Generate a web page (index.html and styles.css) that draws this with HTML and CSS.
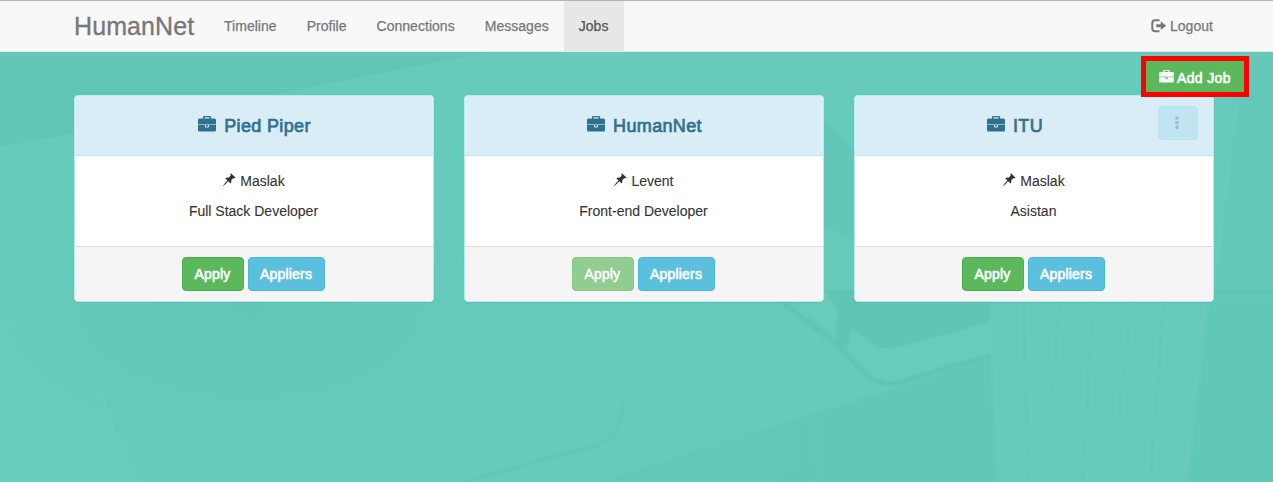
FILE: index.html
```html
<!DOCTYPE html>
<html lang="en">
<head>
<meta charset="utf-8">
<title>HumanNet</title>
<link rel="stylesheet" href="styles.css">
</head>
<body>
<svg width="0" height="0" class="sprite" aria-hidden="true">
  <symbol id="briefcase" viewBox="0 0 18 16"><path d="M5 2.500V1Q5 0 6 0h6Q13 0 13 1v1.500h3.500Q18 2.500 18 4V8H0V4Q0 2.500 1.500 2.500zM6.500 2.500h5V1.200h-5zM0 9h7v1.500Q7 11.500 8 11.500h2q1 0 1-1V9h7v5q0 1.500-1.500 1.500h-15Q0 15.500 0 14zM8 9h2v1.500H8z" fill="currentColor" fill-rule="evenodd"/><path d="M0 8h18v1H0z" fill="currentColor" opacity=".45"/></symbol>
  <symbol id="pin" viewBox="0 0 14 14"><path d="M9 .3L13.600 4.700Q12.600 5.700 11.300 5.200L9.200 7.300Q9.900 9.300 8.600 10.500L6.200 8.200Q3.600 11.600.3 13.700Q2.400 10.300 5.500 7.500L3.300 5.300Q4.500 4 6.600 4.700L8.700 2.600Q8.100 1.300 9 .3z" fill="currentColor"/></symbol>
  <symbol id="logout" viewBox="0 0 16 14"><path d="M8.500 1.200H4Q1.300 1.200 1.300 4v5.500q0 2.700 2.700 2.700h4.500" fill="none" stroke="currentColor" stroke-width="2"/><path d="M5.300 5.200h4.500V2.300L15.200 6.700 9.800 11V8.300H5.300z" fill="currentColor"/></symbol>
</svg>

<nav class="navbar">
  <div class="container navbar-inner">
    <a class="brand">HumanNet</a>
    <a class="nav-link">Timeline</a>
    <a class="nav-link">Profile</a>
    <a class="nav-link">Connections</a>
    <a class="nav-link">Messages</a>
    <a class="nav-link active">Jobs</a>
    <a class="nav-link logout"><svg class="icon-logout"><use href="#logout"/></svg>Logout</a>
  </div>
</nav>

<main class="stage">
  <svg class="backdrop" viewBox="0 52 1273 430" aria-hidden="true">
    <defs>
      <radialGradient id="shade"><stop offset="0" stop-color="#61c6b6" stop-opacity=".7"/><stop offset="1" stop-color="#61c6b6" stop-opacity="0"/></radialGradient>
      <linearGradient id="desk" gradientUnits="userSpaceOnUse" x1="560" y1="0" x2="850" y2="0"><stop offset="0" stop-color="#61c6b6" stop-opacity=".4"/><stop offset="1" stop-color="#61c6b6" stop-opacity=".75"/></linearGradient>
      <filter id="soft"><feGaussianBlur stdDeviation=".8"/></filter>
    </defs>
    <path d="M0 52H487L275 94 0 147z" fill="#61c6b6"/>
    <ellipse cx="250" cy="310" rx="290" ry="150" fill="url(#shade)"/>
    <path d="M824 120L854 150V240L824 225z" fill="#62c7b7"/>
    <path d="M1245 52H1273V300H1214z" fill="#64c9b9"/>
    <g filter="url(#soft)">
      <path d="M0 324L62 310Q88 365 128 452L157 523H0z" fill="#68cdbd" opacity=".5"/>
      <path d="M108 415Q130 450 157 523" stroke="#62c7b7" fill="none"/>
      <path d="M340 524Q450 483 592 447Q627 433 621 401" stroke="#61c5b5" stroke-width="2" fill="none"/>
      <path d="M470 524L633 471Q790 420 891 390L991 358V290H1283V492H500z" fill="url(#desk)"/>
      <path d="M785 290L836 344L870 376Q882 383 895 379L991 350V290z" fill="#60c5b5"/>
      <path d="M785 290H826L838 313 835 340zM851 327L875 346Q885 351 899 347L991 322V351L901 378Q881 383 868 375L847 353z" fill="#67ccbc"/>
      <path d="M780 300L836 344L865 374Q879 387 902 382L991 355" stroke="#60c5b5" stroke-width="5" fill="none"/>
      <path d="M850 439L991 403M780 482L991 434M870 482L991 459M1215 360L1273 343M1215 390L1273 375M1210 430L1273 412M1205 464L1273 446" stroke="#60c5b5" stroke-width="2" opacity=".5"/>
      <path d="M989 290H1210L1187 490H1005Q996 482 995 466z" fill="#66cbbb"/>
      <path d="M1024 300L1028 482M1060 300L1052 396M1094 300L1082 482M1132 300L1118 424M1164 300L1150 482" stroke="#62c8b8" stroke-width="3" opacity=".35"/>
    </g>
  </svg>
  <div class="container">
    <div class="toolbar">
      <button class="btn add-job"><svg class="icon-add"><use href="#briefcase"/></svg>Add Job</button>
    </div>
    <div class="cards">
      <article class="card">
        <header class="card-head"><svg class="icon-case"><use href="#briefcase"/></svg><h3>Pied Piper</h3></header>
        <div class="card-body"><p><svg class="icon-pin"><use href="#pin"/></svg>Maslak</p><p class="role">Full Stack Developer</p></div>
        <footer class="card-foot"><button class="btn success">Apply</button><button class="btn info">Appliers</button></footer>
      </article>
      <article class="card">
        <header class="card-head"><svg class="icon-case"><use href="#briefcase"/></svg><h3>HumanNet</h3></header>
        <div class="card-body"><p><svg class="icon-pin"><use href="#pin"/></svg>Levent</p><p class="role">Front-end Developer</p></div>
        <footer class="card-foot"><button class="btn success disabled">Apply</button><button class="btn info">Appliers</button></footer>
      </article>
      <article class="card">
        <header class="card-head with-menu"><svg class="icon-case"><use href="#briefcase"/></svg><h3>ITU</h3>
          <button class="btn menu" aria-label="Options"><svg class="icon-dots" viewBox="0 0 4 14"><circle cx="2" cy="2" r="1.800"/><circle cx="2" cy="6.700" r="1.800"/><circle cx="2" cy="11.400" r="1.800"/></svg></button>
        </header>
        <div class="card-body"><p><svg class="icon-pin"><use href="#pin"/></svg>Maslak</p><p class="role">Asistan</p></div>
        <footer class="card-foot"><button class="btn success">Apply</button><button class="btn info">Appliers</button></footer>
      </article>
    </div>
  </div>
</main>
</body>
</html>
```
FILE: styles.css
```css
* { box-sizing: border-box; }
body {
  margin: 0;
  height: 482px;
  overflow: hidden;
  display: flex;
  flex-direction: column;
  background: #66cbbb;
  color: #333;
  font: 14px/20px "Liberation Sans", Arial, sans-serif;
}
svg { display: block; flex: none; }
.sprite { position: absolute; }
.container { width: 1140px; margin-left: 74px; }

.navbar {
  height: 52px;
  flex: none;
  background: #f8f8f8;
  border-top: 1px solid #b4b4b4;
  border-bottom: 1px solid #e7e7e7;
}
.navbar-inner { display: flex; height: 50px; color: #777; }
.brand { width: 135px; font-size: 25px; line-height: 50px; letter-spacing: .1px; -webkit-text-stroke: .3px; }
.nav-link { padding: 15px; letter-spacing: .03px; -webkit-text-stroke: .25px; }
.active { width: 60px; background: #e7e7e7; color: #555; }
.logout { display: flex; gap: 3px; margin-left: auto; padding-right: 1px; }
.icon-logout { width: 16px; height: 14px; margin-top: 3px; }

.stage { position: relative; flex: 1; }
.backdrop { position: absolute; inset: 0; width: 1273px; height: 430px; }
.stage .container { position: relative; }
.toolbar { height: 43px; padding-top: 4px; }
.btn {
  height: 34px;
  padding: 0;
  border: 1px solid;
  border-radius: 4px;
  color: #fff;
  font: inherit;
  letter-spacing: .2px;
  -webkit-text-stroke: .6px;
}
.add-job {
  position: relative;
  z-index: 1;
  display: flex;
  align-items: center;
  gap: 3px;
  width: 108px;
  height: 41px;
  margin-left: 1067px;
  padding: 2px 0 0 13px;
  border: 5px solid #f00;
  border-radius: 0;
  background: #5cb85c;
  letter-spacing: .35px;
}
.icon-add { width: 15px; height: 13px; margin-top: -2px; }

.cards { display: grid; grid-template-columns: repeat(3, 360px); gap: 30px; }
.card {
  height: 207px;
  overflow: hidden;
  display: flex;
  flex-direction: column;
  border: 1px solid #bce8f1;
  border-radius: 4px;
  background: #fff;
  box-shadow: 0 1px 1px rgba(0, 0, 0, .05);
}
.card-head {
  position: relative;
  display: flex;
  justify-content: center;
  align-items: center;
  gap: 8px;
  height: 60px;
  padding-left: 1px;
  background: #d9edf7;
  border-bottom: 1px solid #bce8f1;
  color: #31708f;
}
.with-menu { padding-right: 39px; }
.card-head h3 { margin: 0; font-size: 18px; font-weight: 400; letter-spacing: .35px; -webkit-text-stroke: .7px; }
.icon-case { width: 18px; height: 16px; margin-top: -3px; }
.card-body { height: 90px; padding: 15px 1px 0 0; text-align: center; -webkit-text-stroke: .1px; }
.card-body p { display: flex; justify-content: center; gap: 4px; margin: 0 0 10px; }
.icon-pin { width: 14px; height: 14px; margin-top: 2px; }
.card-foot {
  display: flex;
  justify-content: center;
  gap: 4px;
  height: 55px;
  padding: 10px 2px 0 0;
  border-top: 1px solid #ddd;
  background: #f5f5f5;
}
.success { width: 62px; background: #5cb85c; border-color: #4cae4c; }
.info { width: 77px; background: #5bc0de; border-color: #46b8da; }
.disabled { opacity: .65; }
.menu {
  position: absolute;
  top: 10px;
  right: 15px;
  width: 40px;
  display: flex;
  justify-content: center;
  background: #bfe4f2;
  border-color: #b8e1f1;
}
.icon-dots { width: 4px; height: 14px; margin: 9px 2px 0 0; fill: #a3b9c5; }
```
